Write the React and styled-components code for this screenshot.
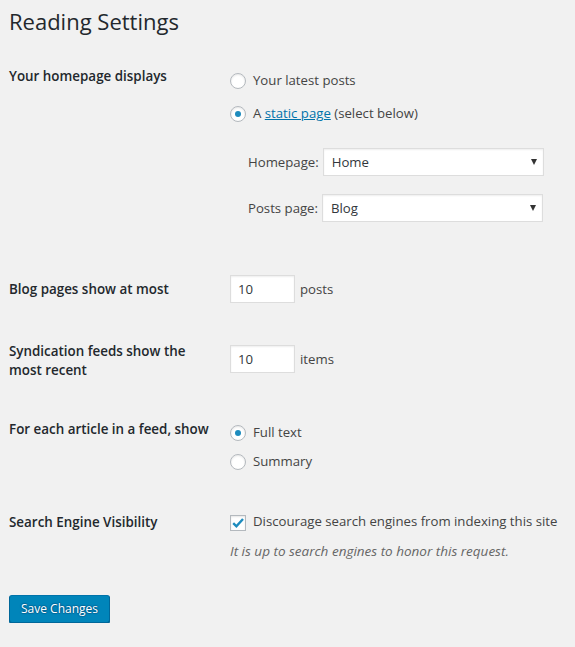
import React from 'react';
import styled, { createGlobalStyle } from 'styled-components';

const GlobalStyle = createGlobalStyle`
    body {
        margin: 0;
        background: #f1f1f1;
        color: #444;
        font-family: 'Open Sans', 'Noto Sans', sans-serif;
        font-size: 13.2px;
        line-height: 19px;
    }
`;

const Wrap = styled.div`
    padding: 7px 0 0 9px;
    width: 566px;
    box-sizing: border-box;
`;

const Title = styled.h1`
    margin: 0;
    font-size: 22px;
    line-height: 29px;
    font-weight: 400;
    color: #23282d;
`;

const Row = styled.div`
    display: grid;
    grid-template-columns: 221px 1fr;
    align-items: start;
    margin-top: ${(p) => p.$mt}px;
`;

const Label = styled.div`
    width: 200px;
    padding-top: ${(p) => p.$pt || 0}px;
    font-size: 13.4px;
    font-weight: 600;
    color: #23282d;
`;

const Cell = styled.div`
    display: flex;
    flex-direction: column;
    align-items: flex-start;
    padding-top: ${(p) => p.$pt || 0}px;
`;

const Option = styled.label`
    display: flex;
    align-items: flex-start;
    gap: 7px;
    margin-top: ${(p) => p.$mt || 0}px;

    & > span:last-child {
        margin: 1px 0 -1px;
    }
`;

const RadioDot = styled.span`
    flex: none;
    box-sizing: border-box;
    width: 16px;
    height: 16px;
    margin-top: 3px;
    border: 1px solid #b4b9be;
    border-radius: 50%;
    background: #fff;
    box-shadow: inset 0 1px 2px rgba(0, 0, 0, 0.1);
    display: flex;
    align-items: center;
    justify-content: center;

    &::after {
        content: '';
        display: ${(p) => (p.$checked ? 'block' : 'none')};
        width: 6px;
        height: 6px;
        border-radius: 50%;
        background: #1e8cbe;
    }
`;

const CheckBox = styled.span`
    flex: none;
    box-sizing: border-box;
    width: 16px;
    height: 16px;
    margin-top: 4px;
    border: 1px solid #b4b9be;
    background: #fff;
    box-shadow: inset 0 1px 2px rgba(0, 0, 0, 0.1);
    display: flex;
    align-items: center;
    justify-content: center;
`;

const Link = styled.a`
    color: #0073aa;
    text-decoration: underline;
`;

const PageList = styled.div`
    display: flex;
    flex-direction: column;
    gap: 18px;
    margin: 26px 0 0 18px;
`;

const PageRow = styled.div`
    display: flex;
    align-items: center;
    gap: 4px;
`;

const Select = styled.div`
    box-sizing: border-box;
    width: 221px;
    height: 28px;
    padding: 0 6px 0 8px;
    display: flex;
    align-items: center;
    justify-content: space-between;
    background: #fff;
    border: 1px solid #ddd;
    box-shadow: inset 0 1px 2px rgba(0, 0, 0, 0.07);
    color: #32373c;
`;

const Caret = styled.span`
    width: 0;
    height: 0;
    border-left: 3px solid transparent;
    border-right: 3px solid transparent;
    border-top: 6px solid #333;
`;

const Inline = styled.div`
    display: flex;
    align-items: center;
    gap: 5px;
`;

const NumberInput = styled.div`
    box-sizing: border-box;
    width: 65px;
    height: 28px;
    padding: 0 7px;
    display: flex;
    align-items: center;
    background: #fff;
    border: 1px solid #ddd;
    box-shadow: inset 0 1px 2px rgba(0, 0, 0, 0.07);
    color: #32373c;
`;

const Description = styled.p`
    margin: 11px 0 0;
    font-size: 13.5px;
    font-style: italic;
    color: #666;
`;

const SaveButton = styled.button`
    margin-top: 34px;
    height: 28px;
    padding: 0 11px 1px;
    font-family: inherit;
    font-size: 12px;
    line-height: 26px;
    color: #fff;
    background: #0085ba;
    border: 1px solid;
    border-color: #0073aa #006799 #006799;
    border-radius: 3px;
    box-shadow: 0 1px 0 #006799;
    text-shadow: 0 -1px 1px #006799, 1px 0 1px #006799, 0 1px 1px #006799,
        -1px 0 1px #006799;
`;

function Radio({ checked, children, mt }) {
    return (
        <Option $mt={mt}>
            <RadioDot $checked={checked} />
            <span>{children}</span>
        </Option>
    );
}

export default function App() {
    return (
        <>
            <GlobalStyle />
            <Wrap>
                <Title>Reading Settings</Title>

                <Row $mt={26}>
                    <Label $pt={5}>Your homepage displays</Label>
                    <Cell $pt={8}>
                        <Radio>Your latest posts</Radio>
                        <Radio checked mt={14}>
                            A <Link>static page</Link> (select below)
                        </Radio>
                        <PageList>
                            <PageRow>
                                <span>Homepage:</span>
                                <Select>
                                    Home
                                    <Caret />
                                </Select>
                            </PageRow>
                            <PageRow>
                                <span>Posts page:</span>
                                <Select>
                                    Blog
                                    <Caret />
                                </Select>
                            </PageRow>
                        </PageList>
                    </Cell>
                </Row>

                <Row $mt={53}>
                    <Label $pt={5}>Blog pages show at most</Label>
                    <Inline>
                        <NumberInput>10</NumberInput>
                        posts
                    </Inline>
                </Row>

                <Row $mt={37}>
                    <Label $pt={2}>Syndication feeds show the most recent</Label>
                    <Cell $pt={5}>
                        <Inline>
                            <NumberInput>10</NumberInput>
                            items
                        </Inline>
                    </Cell>
                </Row>

                <Row $mt={38}>
                    <Label $pt={2}>For each article in a feed, show</Label>
                    <Cell $pt={4}>
                        <Radio checked>Full text</Radio>
                        <Radio mt={10}>Summary</Radio>
                    </Cell>
                </Row>

                <Row $mt={41}>
                    <Label $pt={2}>Search Engine Visibility</Label>
                    <Cell>
                        <Option>
                            <CheckBox>
                                <svg width="14" height="14" viewBox="0 0 14 14">
                                    <path
                                        d="M2.2 7.2 L5.4 10.3 L12 3"
                                        fill="none"
                                        stroke="#1e8cbe"
                                        strokeWidth="2.4"
                                    />
                                </svg>
                            </CheckBox>
                            <span>Discourage search engines from indexing this site</span>
                        </Option>
                        <Description>
                            It is up to search engines to honor this request.
                        </Description>
                    </Cell>
                </Row>

                <SaveButton>Save Changes</SaveButton>
            </Wrap>
        </>
    );
}
